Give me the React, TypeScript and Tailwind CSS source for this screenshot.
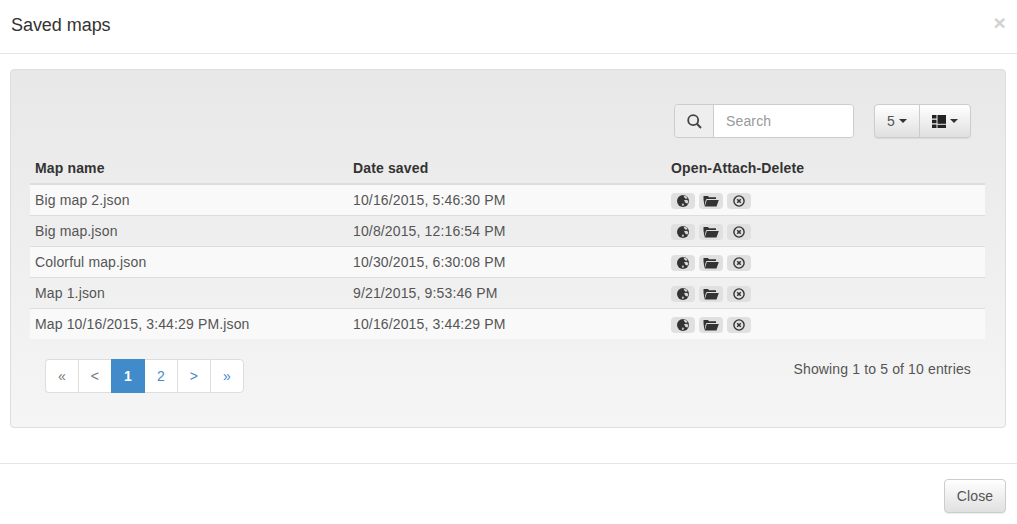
import type React from "react";

const rows = [
  ["Big map 2.json", "10/16/2015, 5:46:30 PM"],
  ["Big map.json", "10/8/2015, 12:16:54 PM"],
  ["Colorful map.json", "10/30/2015, 6:30:08 PM"],
  ["Map 1.json", "9/21/2015, 9:53:46 PM"],
  ["Map 10/16/2015, 3:44:29 PM.json", "10/16/2015, 3:44:29 PM"],
];

const Caret = () => (
  <span className="ml-[4px] inline-block h-0 w-0 border-x-[4px] border-t-[4px] border-x-transparent border-t-[#333]" />
);

const GlobeIcon = () => (
  <svg width="12" height="12" viewBox="0 0 12 12">
    <circle cx="6" cy="6" r="6" fill="#333" />
    <path d="M6.4 0.6 L9.6 1.6 L10.6 3.2 L8.6 3.8 L7.4 2.6 Z" fill="#d8d8d8" />
    <path d="M7 5.2 L9.6 4.8 L11.4 6 L10.6 8.4 L8.6 8 Z" fill="#d8d8d8" />
    <path d="M4.8 8.8 L6.4 8.4 L7.2 9.6 L6 11.2 L5 10.6 Z" fill="#bbb" />
  </svg>
);

const FolderIcon = () => (
  <svg width="16" height="12" viewBox="0 0 16 12">
    <path d="M1.5 11.5 L0.5 4.5 L0.5 1 L5 1 L6 2.2 L13 2.2 L13 4 L3.5 4 L2.5 6 Z" fill="#333" />
    <path d="M3.8 5 L15.8 5 L13.5 11.5 L1.8 11.5 Z" fill="#333" />
  </svg>
);

const RemoveIcon = () => (
  <svg width="12" height="12" viewBox="0 0 12 12" fill="none" stroke="#333">
    <circle cx="6" cy="6" r="5.1" strokeWidth="1.4" />
    <path d="M4.2 4.2 L7.8 7.8 M7.8 4.2 L4.2 7.8" strokeWidth="1.5" />
  </svg>
);

const SearchIcon = () => (
  <svg width="15" height="15" viewBox="0 0 15 15" fill="none" stroke="#444">
    <circle cx="6.2" cy="6.2" r="5" strokeWidth="1.8" />
    <path d="M9.8 9.8 L14 14" strokeWidth="2" />
  </svg>
);

const ViewIcon = () => (
  <svg width="14" height="13" viewBox="0 0 14 13" fill="#222">
    <rect x="0" y="0" width="4.5" height="3.5" />
    <rect x="0" y="4.75" width="4.5" height="3.5" />
    <rect x="0" y="9.5" width="4.5" height="3.5" />
    <rect x="5.5" y="0" width="8.5" height="8.8" />
    <rect x="5.5" y="9.8" width="8.5" height="3.2" />
  </svg>
);

const ActionButton = ({ children }: { children: React.ReactNode }) => (
  <span className="flex h-[16px] w-[24px] items-center justify-center rounded-[4px] bg-[#e0e0e0]">
    {children}
  </span>
);

const pages = [
  { label: "«", cls: "w-[33px] rounded-l-[4px] border-l border-[#ddd] bg-white text-[#777]" },
  { label: "<", cls: "w-[33px] border-l border-[#ddd] bg-white text-[#777]" },
  { label: "1", cls: "w-[34px] border-[#428bca] bg-[#428bca] font-bold text-white" },
  { label: "2", cls: "w-[32px] border-[#ddd] bg-white text-[#428bca]" },
  { label: ">", cls: "w-[33px] border-l border-[#ddd] bg-white text-[#428bca]" },
  { label: "»", cls: "w-[34px] rounded-r-[4px] border-x border-[#ddd] bg-white text-[#428bca]" },
];

export default function App() {
  return (
    <div className="flex h-[524px] w-[1017px] flex-col overflow-hidden bg-white font-['Liberation_Sans',Arial,sans-serif] text-[14px] tracking-[0.14px] text-[#333]">
      {/* Header */}
      <div className="relative h-[54px] shrink-0 border-b border-[#e5e5e5] pl-[11px] pt-[14px]">
        <h4 className="text-[18px] leading-[22px] tracking-[-0.05px]">Saved maps</h4>
        <span className="absolute right-[11px] top-[12px] text-[21px] font-bold leading-[21px] text-[#d1d1d1]">×</span>
      </div>

      {/* Body */}
      <div className="shrink-0 pl-[10px] pr-[11px] pt-[15px]">
        <div className="h-[359px] rounded-[4px] border border-[#ddd] bg-gradient-to-b from-[#e8e8e8] to-[#f5f5f5] pl-[19px] pr-[20px] pt-[34px]">
          {/* Toolbar */}
          <div className="flex justify-end pr-[14px]">
            <div className="flex h-[34px] w-[180px] overflow-hidden rounded-[4px] border border-[#ccc]">
              <span className="flex w-[39px] items-center justify-center border-r border-[#ccc] bg-[#eee]">
                <SearchIcon />
              </span>
              <span className="flex flex-1 items-center bg-white pl-[12px] text-[#999]">Search</span>
            </div>
            <div className="ml-[20px] flex h-[34px] w-[97px] rounded-[4px] border border-[#ccc] bg-gradient-to-b from-white to-[#e0e0e0] shadow-[0_1px_1px_rgba(0,0,0,0.075)]">
              <span className="flex w-[45px] items-center justify-center border-r border-[#ccc] text-[#555]">
                5<Caret />
              </span>
              <span className="flex flex-1 items-center justify-center">
                <ViewIcon />
                <Caret />
              </span>
            </div>
          </div>

          {/* Table */}
          <div className="mt-[17px]">
            <div className="grid h-[30px] grid-cols-[318px_318px_1fr] border-b-2 border-[#ddd] pl-[5px] font-bold leading-[26px]">
              <span>Map name</span>
              <span>Date saved</span>
              <span>Open-Attach-Delete</span>
            </div>
            {rows.map(([name, date], i) => (
              <div
                key={name}
                className={`grid grid-cols-[318px_318px_1fr] items-center pl-[5px] text-[#555] ${
                  i % 2 === 0 ? "bg-[#f9f9f9]" : ""
                } ${i > 0 ? "h-[31px] border-t border-[#ddd]" : "h-[30px]"}`}
              >
                <span>{name}</span>
                <span>{date}</span>
                <span className="flex gap-[4px] pt-[2px]">
                  <ActionButton>
                    <GlobeIcon />
                  </ActionButton>
                  <ActionButton>
                    <FolderIcon />
                  </ActionButton>
                  <ActionButton>
                    <RemoveIcon />
                  </ActionButton>
                </span>
              </div>
            ))}
          </div>

          {/* Pagination */}
          <div className="mt-[20px] flex items-start justify-between pl-[15px] pr-[14px]">
            <div className="flex h-[34px]">
              {pages.map((p) => (
                <span key={p.label} className={`flex items-center justify-center border-y ${p.cls}`}>
                  {p.label}
                </span>
              ))}
            </div>
            <span className="leading-[20px] text-[#555]">Showing 1 to 5 of 10 entries</span>
          </div>
        </div>
      </div>

      {/* Footer */}
      <div className="mt-[35px] flex flex-1 items-start justify-end border-t border-[#e5e5e5] pr-[11px] pt-[15px]">
        <button className="flex h-[34px] w-[62px] items-center justify-center rounded-[4px] border border-[#ccc] bg-gradient-to-b from-white to-[#e0e0e0] text-[#555] shadow-[0_1px_1px_rgba(0,0,0,0.075)]">
          Close
        </button>
      </div>
    </div>
  );
}
